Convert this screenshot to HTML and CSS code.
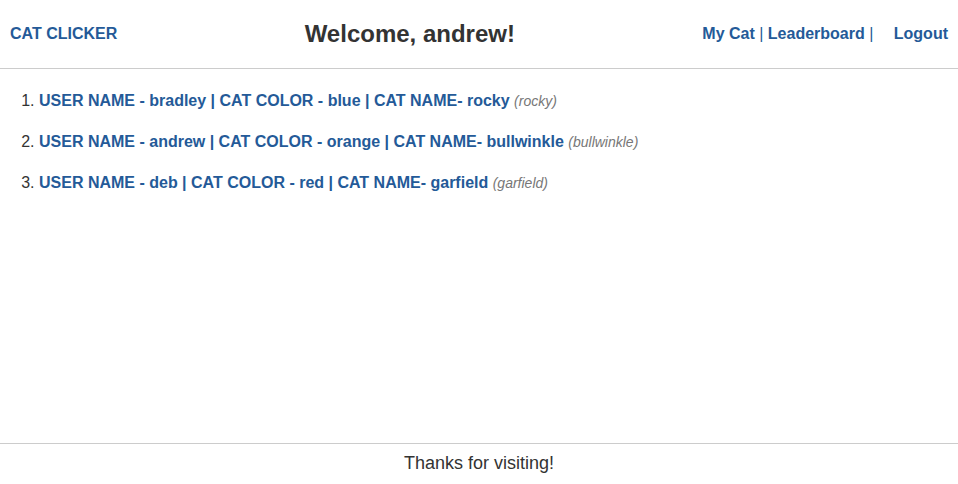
FILE: index.html
```html
<!DOCTYPE html>
<html>
<head>
<meta charset="utf-8">
<link rel="stylesheet" href="styles.css">
</head>
<body>
<div class="page">
  <header class="topbar">
    <a class="brand" href="#">CAT CLICKER</a>
    <h1 class="welcome">Welcome, andrew!</h1>
    <nav class="nav">
      <a href="#">My Cat</a> | <a href="#">Leaderboard</a> |
      <a class="logout" href="#">Logout</a>
    </nav>
  </header>
  <main class="content">
    <ol class="board">
      <li><a href="#">USER NAME - bradley | CAT COLOR - blue | CAT NAME- rocky</a> <em class="alias">(rocky)</em></li>
      <li><a href="#">USER NAME - andrew | CAT COLOR - orange | CAT NAME- bullwinkle</a> <em class="alias">(bullwinkle)</em></li>
      <li><a href="#">USER NAME - deb | CAT COLOR - red | CAT NAME- garfield</a> <em class="alias">(garfield)</em></li>
    </ol>
  </main>
  <footer class="footer">Thanks for visiting!</footer>
</div>
</body>
</html>
```

FILE: styles.css
```css
html, body {
  margin: 0;
  padding: 0;
}
body {
  font-family: "Liberation Sans", Arial, sans-serif;
  color: #333;
  background: #fff;
}
a {
  color: #245a98;
  text-decoration: none;
  font-weight: bold;
}
.page {
  display: flex;
  flex-direction: column;
  height: 484px;
}
.topbar {
  height: 68px;
  display: flex;
  align-items: center;
  justify-content: space-between;
  padding: 0 10px;
  border-bottom: 1px solid #cccccc;
  font-size: 16px;
}
.brand {
  font-size: 16px;
}
.welcome {
  margin: 0;
  font-size: 24px;
  font-weight: bold;
  color: #333;
}
.nav {
  color: #245a98;
  font-size: 16px;
}
.logout {
  margin-left: 16px;
}
.content {
  flex: 1;
}
.board {
  margin: 22px 0 0 0;
  padding-left: 39px;
  font-size: 16px;
  line-height: 20px;
}
.board li {
  margin-bottom: 21px;
}
.alias {
  color: #777;
  font-size: 14px;
  font-style: italic;
}
.footer {
  border-top: 1px solid #cccccc;
  height: 41px;
  padding-top: 8px;
  box-sizing: border-box;
  text-align: center;
  font-size: 18px;
  line-height: 22px;
}
```
